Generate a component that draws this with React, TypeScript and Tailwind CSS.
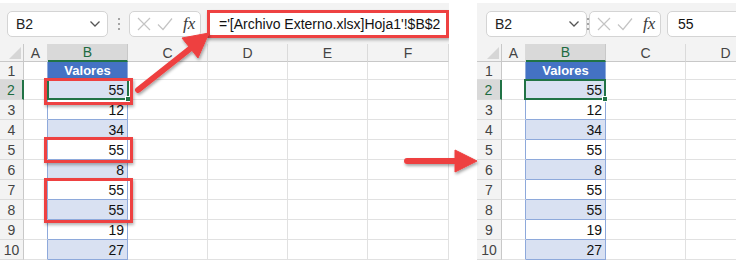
import React from 'react';

const values = [55, 12, 34, 55, 8, 55, 55, 19, 27];

const FormulaIcons: React.FC = () => (
  <div className="flex h-[26px] w-[72px] shrink-0 items-center rounded-[5px] border border-[#d4d4d4] bg-white pl-[7px]">
    <svg className="h-[14px] w-[14px]" viewBox="0 0 14 14" fill="none" stroke="#c4c4c4" strokeWidth="1.2">
      <path d="M1 1l12 12M13 1L1 13" />
    </svg>
    <svg className="ml-[6px] h-[14px] w-[16px]" viewBox="0 0 16 14" fill="none" stroke="#c4c4c4" strokeWidth="1.2">
      <path d="M1 7.5l5 5L15 1.5" />
    </svg>
    <span className="ml-[10px] font-['Liberation_Serif',serif] text-[17px] italic leading-none text-[#3a3a3a]">fx</span>
  </div>
);

const NameBox: React.FC = () => (
  <div className="flex h-[26px] w-[101px] shrink-0 items-center justify-between rounded-[5px] border border-[#d4d4d4] bg-white pl-[8px] pr-[6px]">
    <span className="text-[14px] leading-none text-[#222]">B2</span>
    <svg className="h-[8px] w-[12px]" viewBox="0 0 12 8" fill="none" stroke="#555" strokeWidth="1.3">
      <path d="M1.5 1.5l4.5 4.5 4.5-4.5" />
    </svg>
  </div>
);

const Dots: React.FC = () => (
  <div className="flex flex-col items-center gap-[3px]">
    <span className="h-[2px] w-[2px] rounded-full bg-[#8a8a8a]" />
    <span className="h-[2px] w-[2px] rounded-full bg-[#8a8a8a]" />
    <span className="h-[2px] w-[2px] rounded-full bg-[#8a8a8a]" />
  </div>
);

interface SheetProps {
  cols: string[];
  template: string;
}

const Sheet: React.FC<SheetProps> = ({ cols, template }) => {
  return (
    <div className="relative">
      <div className={`grid ${template}`}>
        {/* header row */}
        <div className="relative h-[18px] border-r border-b border-[#c8c8c8] bg-[#f3f3f3]">
          <svg className="absolute right-[2px] bottom-[2px] h-[12px] w-[12px]" viewBox="0 0 12 12">
            <polygon points="12,0 12,12 0,12" fill="#d6d6d6" />
          </svg>
        </div>
        {cols.map((c) =>
          c === 'B' ? (
            <div key={c} className="flex h-[18px] items-center justify-center border-r border-b-2 border-r-[#c8c8c8] border-b-[#217346] bg-[#d9d9d9] text-[14px] leading-none text-[#1e6b41]">
              {c}
            </div>
          ) : (
            <div key={c} className="flex h-[18px] items-center justify-center border-r border-b border-r-[#dadada] border-b-[#c8c8c8] bg-[#f3f3f3] text-[14px] leading-none text-[#444]">
              {c}
            </div>
          )
        )}

        {/* row 1 */}
        <div className="flex h-[18px] items-center justify-center border-r border-b border-r-[#c8c8c8] border-b-[#dcdcdc] bg-[#f3f3f3] text-[14px] leading-none text-[#444]">1</div>
        {cols.map((c) =>
          c === 'B' ? (
            <div key={c} className="flex h-[18px] items-center justify-center border-r border-b border-[#8ea9db] bg-[#4472c4] text-[13px] font-bold leading-none text-white">
              Valores
            </div>
          ) : c === 'A' ? (
            <div key={c} className="h-[18px] border-r border-b border-r-[#8ea9db] border-b-[#e1e1e1]" />
          ) : (
            <div key={c} className="h-[18px] border-r border-b border-[#e1e1e1]" />
          )
        )}

        {values.map((v, i) => {
          const row = i + 2;
          const shaded = i % 2 === 0;
          return (
            <React.Fragment key={row}>
              {row === 2 ? (
                <div className="flex h-[20px] items-center justify-center border-r-2 border-b border-r-[#217346] border-b-[#dcdcdc] bg-[#d9d9d9] text-[14px] leading-none text-[#1e6b41]">
                  {row}
                </div>
              ) : (
                <div className="flex h-[20px] items-center justify-center border-r border-b border-r-[#c8c8c8] border-b-[#dcdcdc] bg-[#f3f3f3] text-[14px] leading-none text-[#444]">
                  {row}
                </div>
              )}
              {cols.map((c) =>
                c === 'B' ? (
                  <div
                    key={c}
                    className={`flex h-[20px] items-center justify-end border-r border-b border-[#8ea9db] pr-[3px] text-[14px] leading-none text-[#111] ${shaded ? 'bg-[#d9e1f2]' : 'bg-white'}`}
                  >
                    {v}
                  </div>
                ) : c === 'A' ? (
                  <div key={c} className="h-[20px] border-r border-b border-r-[#8ea9db] border-b-[#e1e1e1]" />
                ) : (
                  <div key={c} className="h-[20px] border-r border-b border-[#e1e1e1]" />
                )
              )}
            </React.Fragment>
          );
        })}
      </div>
      {/* active cell B2 */}
      <div className="pointer-events-none absolute top-[35px] left-[47px] h-[21px] w-[82px] border-2 border-[#217346]">
        <span className="absolute -right-[4px] -bottom-[4px] h-[6px] w-[6px] border border-white bg-[#217346]" />
      </div>
    </div>
  );
};

const Highlight: React.FC<{ className: string }> = ({ className }) => (
  <div className={`pointer-events-none absolute border-[3px] border-[#ee4141] shadow-[1px_2px_3px_rgba(0,0,0,0.3)] ${className}`} />
);

export default function App() {
  return (
    <div className="relative flex h-[262px] w-[742px] overflow-hidden bg-white pt-[3px] font-['Liberation_Sans',Arial,sans-serif]">
      {/* before */}
      <div className="w-[449px] shrink-0 overflow-hidden">
        <div className="flex h-[41px] items-center bg-[#f3f3f3] pl-[7px]">
          <NameBox />
          <div className="flex w-[22px] justify-center">
            <Dots />
          </div>
          <FormulaIcons />
          <div className="ml-[6px] flex h-[28px] w-[242px] shrink-0 items-center border-[3px] border-[#ee4141] bg-white pl-[9px] text-[14px] leading-none whitespace-nowrap text-[#111] shadow-[1px_2px_3px_rgba(0,0,0,0.3)]">
            ='[Archivo Externo.xlsx]Hoja1'!$B$2
          </div>
        </div>
        <Sheet cols={['A', 'B', 'C', 'D', 'E', 'F']} template="grid-cols-[24px_24px_80px_80px_80px_80px_81px]" />
      </div>

      {/* after */}
      <div className="ml-[28px] w-[259px] shrink-0 overflow-hidden">
        <div className="flex h-[41px] items-center bg-[#f3f3f3] pl-[9px]">
          <NameBox />
          <div className="flex w-[21px] justify-center">
            <Dots />
          </div>
          <FormulaIcons />
          <div className="ml-[6px] flex h-[26px] w-[100px] shrink-0 items-center rounded-[5px] border border-[#d4d4d4] bg-white pl-[10px] text-[14px] leading-none text-[#111]">
            55
          </div>
        </div>
        <Sheet cols={['A', 'B', 'C', 'D']} template="grid-cols-[25px_24px_80px_80px_80px]" />
      </div>

      <Highlight className="top-[78px] left-[44px] h-[27px] w-[89px]" />
      <Highlight className="top-[137px] left-[44px] h-[26px] w-[89px]" />
      <Highlight className="top-[178px] left-[44px] h-[45px] w-[89px]" />

      <svg className="pointer-events-none absolute top-0 left-0 h-[262px] w-[742px]" viewBox="0 0 742 262">
        <defs>
          <filter id="sh" x="-20%" y="-20%" width="140%" height="140%">
            <feDropShadow dx="1" dy="2" stdDeviation="1.5" floodColor="#000" floodOpacity="0.35" />
          </filter>
        </defs>
        <g filter="url(#sh)" fill="#ee4141" stroke="#ee4141">
          <line x1="138" y1="90" x2="191" y2="48" strokeWidth="6" strokeLinecap="round" />
          <polygon points="209,33 182,38 198,58" strokeWidth="1" strokeLinejoin="round" />
          <line x1="407" y1="161" x2="457" y2="161" strokeWidth="6" strokeLinecap="round" />
          <polygon points="455,150 477,161 455,172" strokeWidth="1" strokeLinejoin="round" />
        </g>
      </svg>
    </div>
  );
}
